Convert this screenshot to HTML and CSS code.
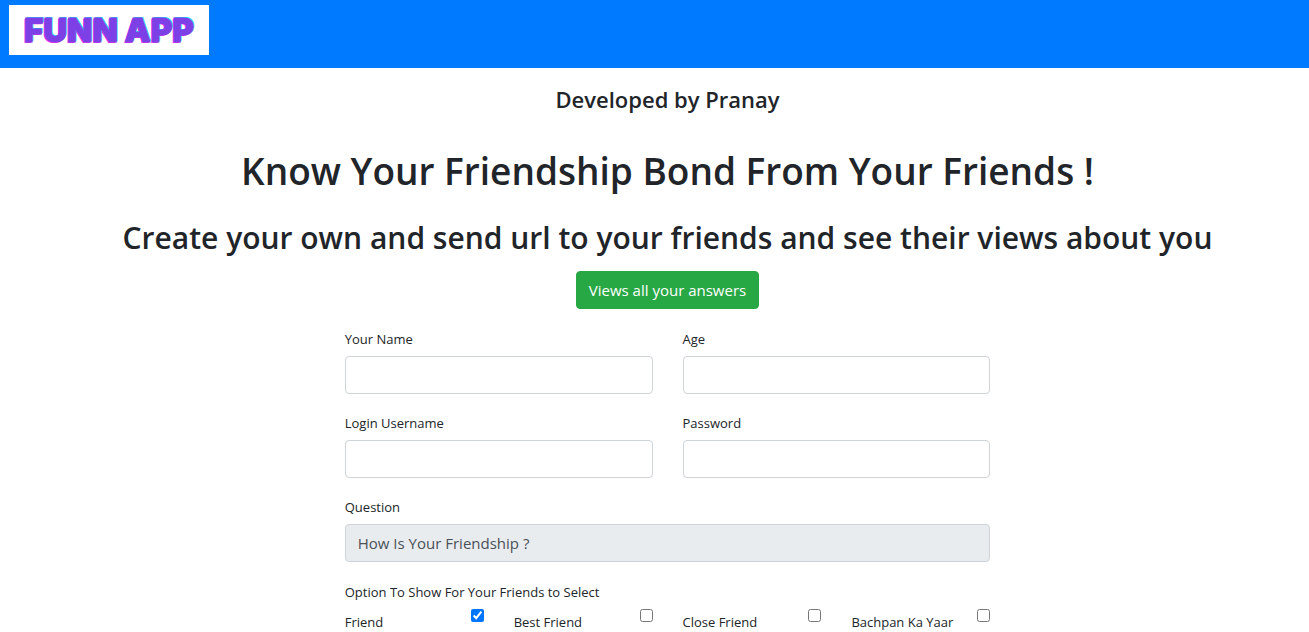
FILE: index.html
```html
<!DOCTYPE html>
<html lang="en">
<head>
<meta charset="utf-8">
<meta name="viewport" content="width=device-width, initial-scale=1">
<title>Funn App</title>
<link rel="stylesheet" href="styles.css">
</head>
<body>
<header class="navbar"><a class="logo" href="#">FUNN APP</a></header>
<main class="content">
  <h4 class="byline">Developed by Pranay</h4>
  <h1 class="title">Know Your Friendship Bond From Your Friends !</h1>
  <h2 class="subtitle">Create your own and send url to your friends and see their views about you</h2>
  <button class="btn" type="button">Views all your answers</button>
  <form class="form">
    <div class="group"><label for="name">Your Name</label><input class="control" id="name" type="text"></div>
    <div class="group"><label for="age">Age</label><input class="control" id="age" type="text"></div>
    <div class="group"><label for="user">Login Username</label><input class="control" id="user" type="text"></div>
    <div class="group"><label for="pass">Password</label><input class="control" id="pass" type="password"></div>
    <div class="group wide"><label for="question">Question</label><input class="control" id="question" type="text" value="How Is Your Friendship ?" readonly></div>
    <fieldset class="options wide">
      <legend>Option To Show For Your Friends to Select</legend>
      <div class="choices">
        <div class="choice"><label for="o1">Friend</label><input id="o1" type="checkbox" checked></div>
        <div class="choice"><label for="o2">Best Friend</label><input id="o2" type="checkbox"></div>
        <div class="choice"><label for="o3">Close Friend</label><input id="o3" type="checkbox"></div>
        <div class="choice"><label for="o4">Bachpan Ka Yaar</label><input id="o4" type="checkbox"></div>
      </div>
    </fieldset>
  </form>
</main>
</body>
</html>
```
FILE: styles.css
```css
* { box-sizing: border-box; }
html { overflow-y: auto; scrollbar-width: none; }
body {
  margin: 0;
  background: #fff;
  color: #212529;
  font-family: "Open Sans", "Noto Sans", sans-serif;
  font-size: 13px;
  line-height: 22px;
}
.navbar { display: flex; padding: 5px 9px 13px; background: #007bff; }
.logo {
  width: 200px;
  background: #fff;
  color: #7d3fe6;
  font: 900 33px/50px Inter, sans-serif;
  text-align: center;
  text-decoration: none;
  white-space: nowrap;
  -webkit-text-stroke: 1px #7d3fe6;
  text-shadow: 1px -1px #22d3f5, -1px 1px #f032e6;
}
.content {
  display: flex;
  flex-direction: column;
  align-items: center;
  padding: 16px 0 0 26px;
}
.byline, .title, .subtitle { margin: 0; font-weight: 600; text-align: center; }
.byline { font-size: 22px; line-height: 30px; margin-bottom: 33px; }
.title { font-size: 37px; line-height: 48px; margin-bottom: 23px; }
.subtitle { font-size: 30px; line-height: 40px; margin-bottom: 13px; }
.btn {
  height: 38px;
  padding: 0 12px;
  border: 1px solid #28a745;
  border-radius: 4px;
  background: #28a745;
  color: #fff;
  font: 15px/24px "Open Sans", sans-serif;
}
.form {
  display: grid;
  grid-template-columns: 1fr 1fr;
  gap: 18px 30px;
  width: calc(50% + 4px);
  min-width: 320px;
  margin: 19px 0 0;
}
.wide { grid-column: 1 / -1; }
.group { display: flex; flex-direction: column; gap: 6px; }
.control {
  width: 100%;
  height: 38px;
  padding: 0 12px;
  border: 1px solid #ced4da;
  border-radius: 4px;
  background: #fff;
  color: #495057;
  font: 15px/24px "Open Sans", sans-serif;
}
.control[readonly] { background: #e9ecef; }
.options { margin: 0; padding: 0; border: 0; min-width: 0; }
.options legend { padding: 0; line-height: 24px; }
.choices { display: grid; grid-template-columns: repeat(4, 1fr); column-gap: 30px; padding-top: 5px; }
.choice { display: flex; justify-content: space-between; align-items: flex-start; }
.choice label { padding-top: 2px; white-space: nowrap; }
.choice input { width: 13px; height: 13px; margin: 0; }
```
